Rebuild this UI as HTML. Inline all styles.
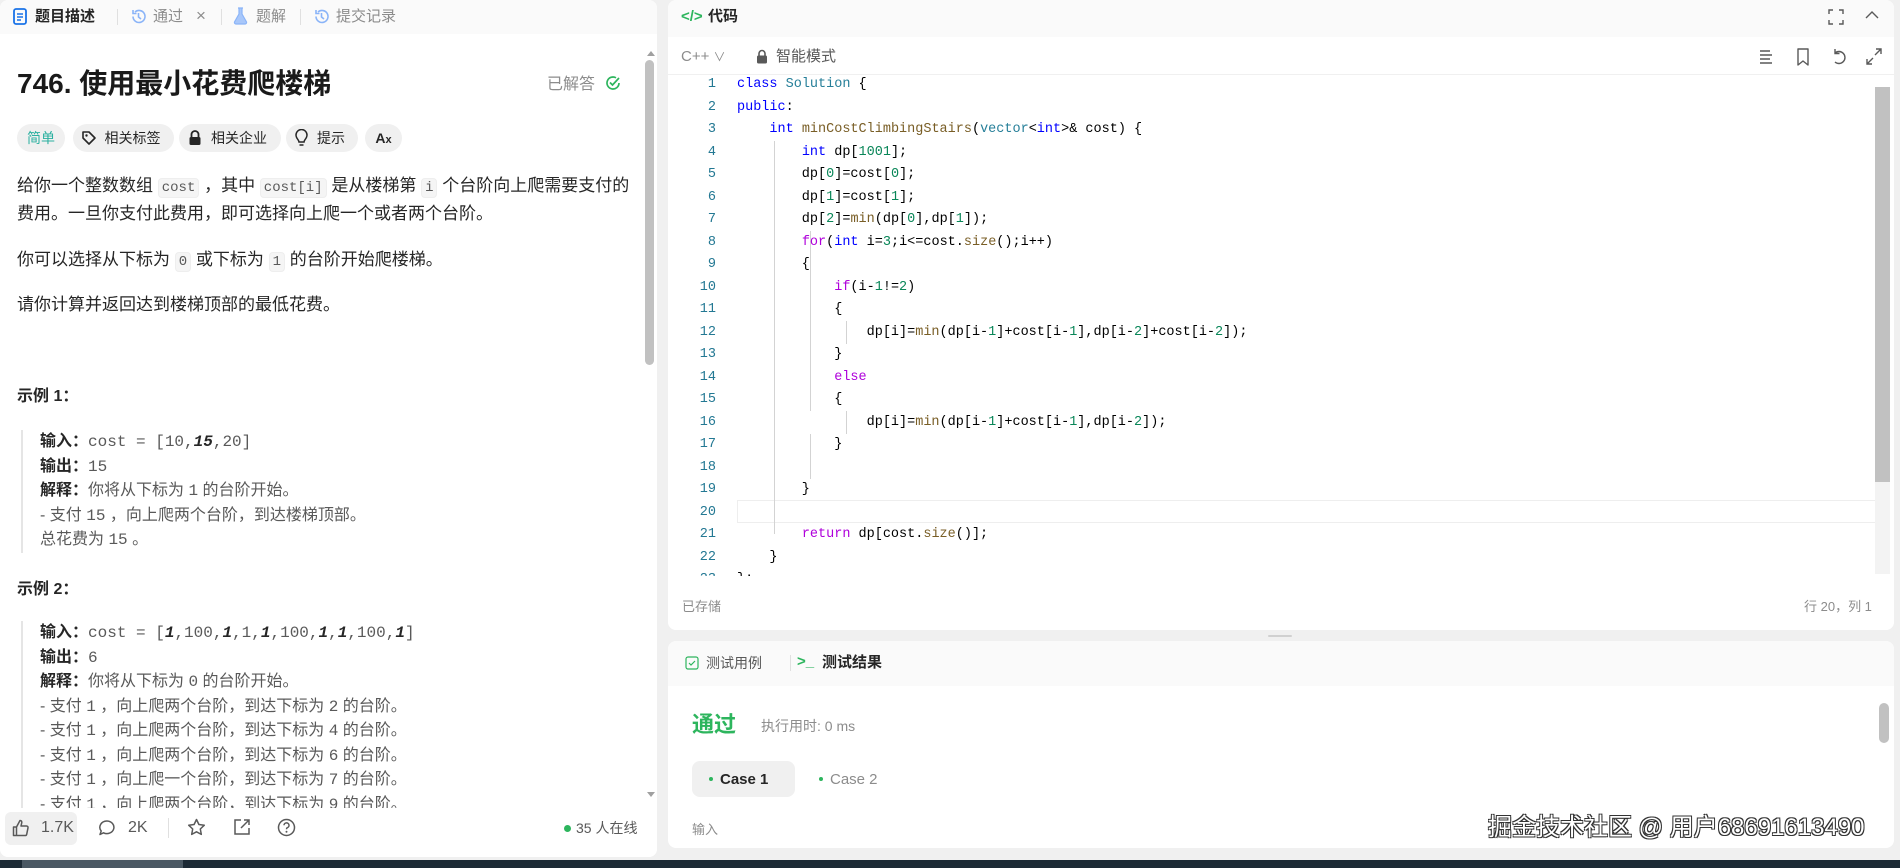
<!DOCTYPE html>
<html><head><meta charset="utf-8">
<style>
*{box-sizing:border-box;margin:0;padding:0}
body{width:1900px;height:868px;overflow:hidden;background:#f0f0f0;font-family:"Liberation Sans","Noto Sans CJK SC",sans-serif;color:#262626;position:relative}
.abs{position:absolute}
.panel{position:absolute;background:#fff;border-radius:8px;overflow:hidden}
.hdr{position:absolute;left:0;right:0;top:0;background:#fafafa}
.t{position:absolute;white-space:nowrap;line-height:1}
.gray{color:#8c8c8c}
.pill{position:absolute;top:124px;height:28px;border-radius:14px;background:#f0f0f0;font-size:14px;line-height:28px;text-align:center;color:#262626}
.code{position:absolute;font-family:"Liberation Mono",monospace;font-size:13.5px;white-space:pre;line-height:22.5px;color:#000}
.ln{position:absolute;left:0;width:716px;text-align:right;font-family:"Liberation Mono",monospace;font-size:13.5px;color:#237893;line-height:22.5px}
.k{color:#0000ff}.p{color:#af00db}.f{color:#795e26}.c{color:#267f99}.n{color:#098658}
.ex{position:absolute;left:21px;border-left:2px solid #e5e5e5;padding-left:17px;font-size:16px;line-height:24.5px;color:#595959}
.ex b{color:#262626}
.mono{font-family:"Liberation Mono",monospace;font-size:16px}
code{font-family:"Liberation Mono",monospace;font-size:14px;background:#f5f5f5;border:1px solid #eee;border-radius:4px;padding:1px 3px;color:#595959}
</style></head><body>

<!-- LEFT PANEL -->
<div class="panel" style="left:0;top:0;width:657px;height:857px">
  <div class="hdr" style="height:34px">
    <svg class="abs" style="left:13px;top:8px" width="14" height="17" viewBox="0 0 14 17"><rect x="1" y="1" width="12" height="15" rx="2" fill="none" stroke="#1a73e8" stroke-width="1.8"/><path d="M4 6h6M4 9h6M4 12h4" stroke="#1a73e8" stroke-width="1.6"/></svg>
    <div class="t" style="left:35px;top:9px;font-size:15px;font-weight:bold">题目描述</div>
    <div class="abs" style="left:117px;top:9px;width:1px;height:16px;background:#e0e0e0"></div>
    <svg class="abs" style="left:130px;top:8px" width="17" height="17" viewBox="0 0 17 17"><path d="M3 8.5a6 6 0 1 0 2-4.5M3 2v3.5h3.5M8.5 5v4l2.5 2" fill="none" stroke="#8ab4f8" stroke-width="1.6"/></svg>
    <div class="t gray" style="left:153px;top:9px;font-size:15px">通过</div>
    <div class="t gray" style="left:196px;top:7px;font-size:17px">×</div>
    <div class="abs" style="left:221px;top:9px;width:1px;height:16px;background:#e0e0e0"></div>
    <svg class="abs" style="left:233px;top:7px" width="15" height="18" viewBox="0 0 15 18"><path d="M5 1h5M6 1v6L1.5 15a1.5 1.5 0 0 0 1.3 2h9.4a1.5 1.5 0 0 0 1.3-2L9 7V1" fill="#a8c7fa" stroke="#8ab4f8" stroke-width="1.2"/></svg>
    <div class="t gray" style="left:256px;top:9px;font-size:15px">题解</div>
    <div class="abs" style="left:300px;top:9px;width:1px;height:16px;background:#e0e0e0"></div>
    <svg class="abs" style="left:313px;top:8px" width="17" height="17" viewBox="0 0 17 17"><path d="M3 8.5a6 6 0 1 0 2-4.5M3 2v3.5h3.5M8.5 5v4l2.5 2" fill="none" stroke="#8ab4f8" stroke-width="1.6"/></svg>
    <div class="t gray" style="left:336px;top:9px;font-size:15px">提交记录</div>
  </div>
  <div class="t" style="left:17px;top:70px;font-size:28px;font-weight:bold;color:#1a1a1a">746. 使用最小花费爬楼梯</div>
  <div class="t gray" style="left:547px;top:77px;font-size:16px">已解答</div>
  <svg class="abs" style="left:605px;top:75px" width="16" height="16" viewBox="0 0 16 16"><path d="M14 8a6 6 0 1 1-3-5.2" fill="none" stroke="#2db55d" stroke-width="1.7"/><path d="M5 7.5l2.5 2.5L14 3" fill="none" stroke="#2db55d" stroke-width="1.7"/></svg>

  <div class="pill" style="left:17px;width:48px;color:#2bb0a0">简单</div>
  <div class="pill" style="left:73px;width:101px"><span style="margin-left:18px">相关标签</span></div>
  <svg class="abs" style="left:81px;top:130px" width="16" height="16" viewBox="0 0 16 16"><path d="M2 2h6l6 6-6 6-6-6z" fill="none" stroke="#262626" stroke-width="1.6" stroke-linejoin="round"/><circle cx="5.5" cy="5.5" r="1.2" fill="#262626"/></svg>
  <div class="pill" style="left:179px;width:102px"><span style="margin-left:18px">相关企业</span></div>
  <svg class="abs" style="left:188px;top:130px" width="14" height="16" viewBox="0 0 14 16"><path d="M3.5 7V4.5a3.5 3.5 0 0 1 7 0V7" fill="none" stroke="#262626" stroke-width="1.8"/><rect x="1.5" y="7" width="11" height="8" rx="1.5" fill="#262626"/></svg>
  <div class="pill" style="left:286px;width:72px"><span style="margin-left:18px">提示</span></div>
  <svg class="abs" style="left:295px;top:129px" width="13" height="18" viewBox="0 0 13 18"><path d="M4 13c0-2-3-3.5-3-7a5.5 5.5 0 0 1 11 0c0 3.5-3 5-3 7zM4.5 16h4" fill="none" stroke="#262626" stroke-width="1.5"/></svg>
  <div class="pill" style="left:365px;width:37px;font-weight:bold">A<span style="font-size:11px">x</span></div>

  <div class="abs" style="left:17px;top:173px;width:625px;font-size:17px;line-height:26px;color:#262626">给你一个整数数组 <code>cost</code> ，其中 <code>cost[i]</code> 是从楼梯第 <code>i</code> 个台阶向上爬需要支付的费用。一旦你支付此费用，即可选择向上爬一个或者两个台阶。</div>
  <div class="abs" style="left:17px;top:247px;font-size:17px;line-height:26px">你可以选择从下标为 <code>0</code> 或下标为 <code>1</code> 的台阶开始爬楼梯。</div>
  <div class="abs" style="left:17px;top:292px;font-size:17px;line-height:26px">请你计算并返回达到楼梯顶部的最低花费。</div>

  <div class="t" style="left:17px;top:389px;font-size:16px;font-weight:bold">示例 1：</div>
  <div class="ex" style="top:430px">
    <div><b>输入：</b><span class="mono">cost = [10,<b><i>15</i></b>,20]</span></div>
    <div><b>输出：</b><span class="mono">15</span></div>
    <div><b>解释：</b>你将从下标为 <span class="mono">1</span> 的台阶开始。</div>
    <div>- 支付 <span class="mono">15</span> ，向上爬两个台阶，到达楼梯顶部。</div>
    <div>总花费为 <span class="mono">15</span> 。</div>
  </div>
  <div class="t" style="left:17px;top:582px;font-size:16px;font-weight:bold">示例 2：</div>
  <div class="ex" style="top:621px;height:187px;overflow:hidden">
    <div><b>输入：</b><span class="mono">cost = [<b><i>1</i></b>,100,<b><i>1</i></b>,1,<b><i>1</i></b>,100,<b><i>1</i></b>,<b><i>1</i></b>,100,<b><i>1</i></b>]</span></div>
    <div><b>输出：</b><span class="mono">6</span></div>
    <div><b>解释：</b>你将从下标为 <span class="mono">0</span> 的台阶开始。</div>
    <div>- 支付 <span class="mono">1</span> ，向上爬两个台阶，到达下标为 <span class="mono">2</span> 的台阶。</div>
    <div>- 支付 <span class="mono">1</span> ，向上爬两个台阶，到达下标为 <span class="mono">4</span> 的台阶。</div>
    <div>- 支付 <span class="mono">1</span> ，向上爬两个台阶，到达下标为 <span class="mono">6</span> 的台阶。</div>
    <div>- 支付 <span class="mono">1</span> ，向上爬一个台阶，到达下标为 <span class="mono">7</span> 的台阶。</div>
    <div>- 支付 <span class="mono">1</span> ，向上爬两个台阶，到达下标为 <span class="mono">9</span> 的台阶。</div>
  </div>
  <div class="abs" style="left:647px;top:51px;width:0;height:0;border:4px solid transparent;border-bottom:5px solid #a0a0a0;border-top:0"></div>
  <div class="abs" style="left:645px;top:60px;width:9px;height:305px;border-radius:5px;background:#c1c1c1"></div>
  <div class="abs" style="left:647px;top:792px;width:0;height:0;border:4px solid transparent;border-top:5px solid #a0a0a0;border-bottom:0"></div>

  <div class="abs" style="left:0;top:808px;width:657px;height:49px;background:#fff"></div>
  <div class="abs" style="left:5px;top:812px;width:72px;height:33px;border-radius:6px;background:#f0f0f0"></div>
  <svg class="abs" style="left:12px;top:819px" width="18" height="18" viewBox="0 0 18 18"><path d="M1.5 8h3v8.5h-3zM4.5 8l3.5-6.5c1.5 0 2 1 1.7 2.5L9 7h5.5a1.5 1.5 0 0 1 1.5 1.8l-1.3 6.5a1.5 1.5 0 0 1-1.5 1.2H4.5" fill="none" stroke="#595959" stroke-width="1.5" stroke-linejoin="round"/></svg>
  <div class="t" style="left:41px;top:820px;font-size:16px;color:#595959">1.7K</div>
  <svg class="abs" style="left:98px;top:819px" width="18" height="18" viewBox="0 0 18 18"><path d="M9 2a7 6.3 0 1 1-3.5 11.8L2 15.5l1.2-3.5A7 6.3 0 0 1 9 2z" fill="none" stroke="#595959" stroke-width="1.5" stroke-linejoin="round"/></svg>
  <div class="t" style="left:128px;top:820px;font-size:16px;color:#595959">2K</div>
  <div class="abs" style="left:168px;top:818px;width:1px;height:20px;background:#e0e0e0"></div>
  <svg class="abs" style="left:187px;top:818px" width="19" height="19" viewBox="0 0 19 19"><path d="M9.5 1.5l2.4 5 5.4.7-4 3.8 1 5.4-4.8-2.6-4.8 2.6 1-5.4-4-3.8 5.4-.7z" fill="none" stroke="#595959" stroke-width="1.5" stroke-linejoin="round"/></svg>
  <svg class="abs" style="left:233px;top:818px" width="18" height="18" viewBox="0 0 18 18"><path d="M8 2H2v14h14v-6M11 2h5v5M16 2L8 10" fill="none" stroke="#595959" stroke-width="1.5"/></svg>
  <svg class="abs" style="left:277px;top:818px" width="19" height="19" viewBox="0 0 19 19"><circle cx="9.5" cy="9.5" r="8" fill="none" stroke="#595959" stroke-width="1.5"/><path d="M7 7.3a2.5 2.5 0 1 1 3.3 2.4c-.6.3-.8.7-.8 1.5" fill="none" stroke="#595959" stroke-width="1.5"/><circle cx="9.5" cy="13.8" r="1" fill="#595959"/></svg>
  <div class="abs" style="left:564px;top:825px;width:7px;height:7px;border-radius:50%;background:#2db55d"></div>
  <div class="t" style="left:576px;top:821px;font-size:14px;color:#595959">35 人在线</div>
</div>

<!-- RIGHT EDITOR PANEL -->
<div class="panel" style="left:668px;top:0;width:1226px;height:630px">
  <div class="hdr" style="height:37px"></div>
  <div class="t" style="left:13px;top:9px;font-size:15px;color:#2db55d;font-weight:bold">&lt;/&gt;</div>
  <div class="t" style="left:40px;top:9px;font-size:15px;font-weight:bold">代码</div>
  <svg class="abs" style="left:1160px;top:9px" width="16" height="16" viewBox="0 0 16 16"><path d="M1 5V1h4M11 1h4v4M15 11v4h-4M5 15H1v-4" fill="none" stroke="#595959" stroke-width="1.4"/></svg>
  <svg class="abs" style="left:1197px;top:10px" width="14" height="10" viewBox="0 0 14 10"><path d="M1 8l6-6 6 6" fill="none" stroke="#595959" stroke-width="1.4"/></svg>

  <div class="t gray" style="left:13px;top:49px;font-size:15px">C++ <span style="font-size:12px">∨</span></div>
  <svg class="abs" style="left:88px;top:49px" width="12" height="15" viewBox="0 0 12 15"><path d="M3 7V4.5a3 3 0 0 1 6 0V7" fill="none" stroke="#595959" stroke-width="1.6"/><rect x="1" y="6.5" width="10" height="8" rx="1.5" fill="#595959"/></svg>
  <div class="t" style="left:108px;top:49px;font-size:15px;color:#595959">智能模式</div>
  <svg class="abs" style="left:1090px;top:49px" width="16" height="16" viewBox="0 0 16 16"><path d="M2 2h10M2 6h12M2 10h10M2 14h12" stroke="#595959" stroke-width="1.4"/></svg>
  <svg class="abs" style="left:1128px;top:48px" width="14" height="18" viewBox="0 0 14 18"><path d="M2 1h10v16l-5-4-5 4z" fill="none" stroke="#595959" stroke-width="1.4" stroke-linejoin="round"/></svg>
  <svg class="abs" style="left:1163px;top:48px" width="16" height="18" viewBox="0 0 16 18"><path d="M4 5a6 6 0 1 1 0 9M4 1v4.5h4.5" fill="none" stroke="#595959" stroke-width="1.4"/></svg>
  <svg class="abs" style="left:1198px;top:48px" width="16" height="17" viewBox="0 0 16 17"><path d="M10 1h5v5M15 1l-6 6M6 16H1v-5M1 16l6-6" fill="none" stroke="#595959" stroke-width="1.4"/></svg>
  <div class="abs" style="left:0;right:0;top:74px;height:1px;background:#f0f0f0"></div>

  <div class="abs" style="left:69px;top:500px;width:1140px;height:23px;border:1px solid #eeeeee"></div>
  <div class="abs" style="left:106px;top:141px;width:1px;height:393px;background:#d3d3d3"></div>
  <div class="abs" style="left:142px;top:231px;width:1px;height:180px;background:#d3d3d3"></div>
  <div class="abs" style="left:178px;top:321px;width:1px;height:23px;background:#d3d3d3"></div>
  <div class="abs" style="left:178px;top:411px;width:1px;height:23px;background:#d3d3d3"></div>
  <div class="abs" style="left:142px;top:434px;width:1px;height:45px;background:#d3d3d3"></div>

  <div class="ln" style="left:-668px;top:74px;width:716px">1<br>2<br>3<br>4<br>5<br>6<br>7<br>8<br>9<br>10<br>11<br>12<br>13<br>14<br>15<br>16<br>17<br>18<br>19<br>20<br>21<br>22<br>23</div>
  <div class="code" style="left:69px;top:74px"><span class="k">class</span> <span class="c">Solution</span> {
<span class="k">public</span>:
    <span class="k">int</span> <span class="f">minCostClimbingStairs</span>(<span class="c">vector</span>&lt;<span class="k">int</span>&gt;&amp; cost) {
        <span class="k">int</span> dp[<span class="n">1001</span>];
        dp[<span class="n">0</span>]=cost[<span class="n">0</span>];
        dp[<span class="n">1</span>]=cost[<span class="n">1</span>];
        dp[<span class="n">2</span>]=<span class="f">min</span>(dp[<span class="n">0</span>],dp[<span class="n">1</span>]);
        <span class="p">for</span>(<span class="k">int</span> i=<span class="n">3</span>;i&lt;=cost.<span class="f">size</span>();i++)
        {
            <span class="p">if</span>(i-<span class="n">1</span>!=<span class="n">2</span>)
            {
                dp[i]=<span class="f">min</span>(dp[i-<span class="n">1</span>]+cost[i-<span class="n">1</span>],dp[i-<span class="n">2</span>]+cost[i-<span class="n">2</span>]);
            }
            <span class="p">else</span>
            {
                dp[i]=<span class="f">min</span>(dp[i-<span class="n">1</span>]+cost[i-<span class="n">1</span>],dp[i-<span class="n">2</span>]);
            }

        }

        <span class="p">return</span> dp[cost.<span class="f">size</span>()];
    }
};</div>
  <div class="abs" style="left:0;top:576px;width:1226px;height:54px;background:#fff"></div>
  <div class="t" style="left:14px;top:600px;font-size:13px;color:#8c8c8c">已存储</div>
  <div class="t" style="left:1136px;top:600px;font-size:13px;color:#8c8c8c">行 20，列 1</div>
  <div class="abs" style="left:1207px;top:87px;width:15px;height:395px;background:#c1c1c1"></div>
  <div class="abs" style="left:1207px;top:482px;width:15px;height:92px;background:#f3f3f3"></div>
</div>
<div class="abs" style="left:1268px;top:635px;width:24px;height:2px;border-radius:1px;background:#d0d0d0"></div>

<!-- BOTTOM RESULT PANEL -->
<div class="panel" style="left:668px;top:641px;width:1226px;height:207px">
  <div class="hdr" style="height:45px"></div>
  <svg class="abs" style="left:17px;top:15px" width="14" height="14" viewBox="0 0 14 14"><rect x="1" y="1" width="12" height="12" rx="2" fill="none" stroke="#2db55d" stroke-width="1.2"/><path d="M4 7l2 2 4-4" fill="none" stroke="#2db55d" stroke-width="1.2"/></svg>
  <div class="t" style="left:38px;top:15px;font-size:14px;color:#595959">测试用例</div>
  <div class="abs" style="left:122px;top:14px;width:1px;height:16px;background:#e0e0e0"></div>
  <div class="t" style="left:129px;top:13px;font-size:15px;color:#2db55d;font-weight:bold">&gt;_</div>
  <div class="t" style="left:154px;top:14px;font-size:15px;font-weight:bold">测试结果</div>

  <div class="t" style="left:24px;top:73px;font-size:22px;font-weight:bold;color:#2db55d">通过</div>
  <div class="t" style="left:93px;top:78px;font-size:14px;color:#8c8c8c">执行用时: 0 ms</div>
  <div class="abs" style="left:24px;top:120px;width:103px;height:36px;border-radius:8px;background:#f0f0f0"></div>
  <div class="abs" style="left:41px;top:136px;width:4px;height:4px;border-radius:50%;background:#2db55d"></div>
  <div class="t" style="left:52px;top:131px;font-size:15px;font-weight:bold">Case 1</div>
  <div class="abs" style="left:151px;top:136px;width:4px;height:4px;border-radius:50%;background:#2db55d"></div>
  <div class="t" style="left:162px;top:131px;font-size:15px;color:#8c8c8c">Case 2</div>
  <div class="t" style="left:24px;top:182px;font-size:13px;color:#8c8c8c">输入</div>
  <div class="abs" style="left:1211px;top:62px;width:10px;height:40px;border-radius:5px;background:#c1c1c1"></div>
</div>
<div class="t" style="left:1488px;top:816px;font-size:24px;color:#fff;text-shadow:-1px -1px 0 #333,1px -1px 0 #333,-1px 1px 0 #333,1px 1px 0 #333">掘金技术社区 @ 用户68691613490</div>

<div class="abs" style="left:0;top:860px;width:1900px;height:8px;background:#1c2a35"></div>
<div class="abs" style="left:22px;top:860px;width:161px;height:8px;background:#4a5863"></div>
</body></html>
